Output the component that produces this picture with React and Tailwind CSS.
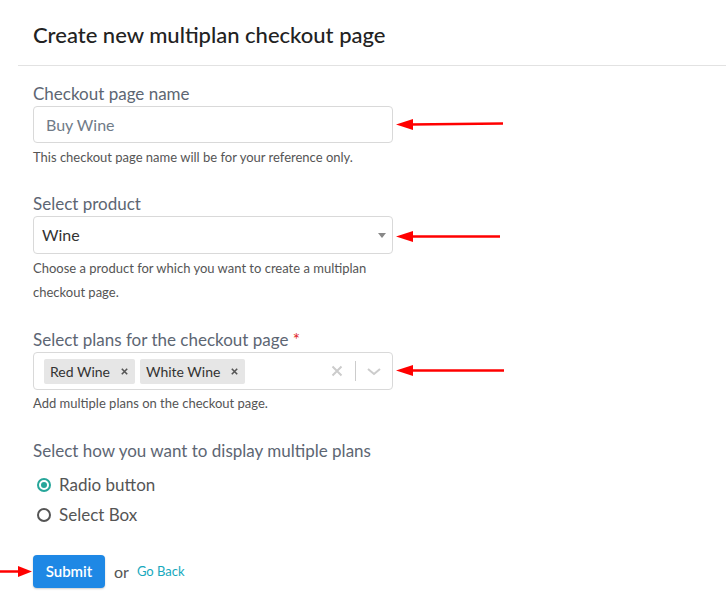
import React from "react";

function ChipX() {
  return (
    <svg width="7" height="7" viewBox="0 0 7 7"><path d="M0.8 0.8l5.4 5.4M6.2 0.8l-5.4 5.4" stroke="#555" strokeWidth="1.6" /></svg>
  );
}

export default function App() {
  return (
    <div className="relative w-[726px] h-[608px] bg-white overflow-hidden" style={{ fontFamily: "Lato, 'Open Sans', sans-serif" }}>
      <div className="pl-[33px] pt-[20px] text-[22px] leading-[29px] font-medium text-[#222]">Create new multiplan checkout page</div>
      <div className="ml-[18px] mt-[16px] h-px bg-[#e2e2e2]" />
      <div className="px-[33px]">
        <div className="mt-[16px] text-[17px] leading-[24px] text-[#5d6673]">Checkout page name</div>
        <div className="w-[360px] h-[37px] border border-[#d9d9d9] rounded-[4px] flex items-center pl-[12px] text-[16px] text-[#707b88]">Buy Wine</div>
        <div className="mt-[5px] text-[13px] leading-[18px] text-[#555]">This checkout page name will be for your reference only.</div>

        <div className="mt-[26px] text-[17px] leading-[24px] text-[#5d6673]">Select product</div>
        <div className="w-[360px] h-[38px] border border-[#d9d9d9] rounded-[4px] flex items-center justify-between pl-[8px] pr-[6px] text-[16px] text-[#333]">
          <span>Wine</span>
          <svg width="8" height="5" viewBox="0 0 8 5"><path d="M0 0h8L4 5z" fill="#888" /></svg>
        </div>
        <div className="mt-[2px] text-[13px] leading-[24px] text-[#555]">
          Choose a product for which you want to create a multiplan<br />checkout page.
        </div>

        <div className="mt-[24px] text-[17px] leading-[24px] text-[#5d6673]">
          Select plans for the checkout page <span className="text-[#e02424]">*</span>
        </div>
        <div className="w-[360px] h-[38px] border border-[#d9d9d9] rounded-[4px] flex items-center pl-[10px] text-[14px] text-[#333]">
          <div className="flex items-center gap-[5px] flex-1">
            <div className="h-[25px] bg-[#e6e6e6] rounded-[2px] flex items-center pl-[6px] pr-[7px] gap-[11px]">
              <span>Red Wine</span>
              <ChipX />
            </div>
            <div className="h-[25px] bg-[#e6e6e6] rounded-[2px] flex items-center pl-[6px] pr-[7px] gap-[11px]">
              <span>White Wine</span>
              <ChipX />
            </div>
          </div>
          <div className="flex items-center">
            <svg width="20" height="20" viewBox="0 0 20 20" className="mr-[8px]"><path d="M5.5 5.5l9 9M14.5 5.5l-9 9" stroke="#ccc" strokeWidth="2" /></svg>
            <div className="w-px h-[20px] bg-[#ccc]" />
            <svg width="36" height="20" viewBox="0 0 36 20"><path d="M12 8l6 5 6-5" stroke="#ccc" strokeWidth="2" fill="none" /></svg>
          </div>
        </div>
        <div className="mt-[4px] text-[13px] leading-[18px] text-[#555]">Add multiple plans on the checkout page.</div>

        <div className="mt-[27px] text-[17px] leading-[24px] text-[#5d6673]">Select how you want to display multiple plans</div>
        <div className="mt-[7px]">
          <div className="h-[30px] flex items-center pl-[4px] gap-[8px] text-[17px] text-[#555]">
            <span className="w-[14px] h-[14px] rounded-full border-2 border-[#26a69a] flex items-center justify-center">
              <span className="w-[6px] h-[6px] rounded-full bg-[#26a69a]" />
            </span>
            <span>Radio button</span>
          </div>
          <div className="h-[30px] flex items-center pl-[4px] gap-[8px] text-[17px] text-[#555]">
            <span className="w-[14px] h-[14px] rounded-full border-2 border-[#555]" />
            <span>Select Box</span>
          </div>
        </div>

        <div className="mt-[25px] flex items-center">
          <div className="w-[72px] h-[33px] rounded-[4px] bg-[#1e88e5] text-white text-[15px] font-semibold flex items-center justify-center shadow-[0_1px_2px_rgba(0,0,0,0.2)]">Submit</div>
          <span className="ml-[9px] text-[16px] text-[#555]">or</span>
          <span className="ml-[8px] text-[13px] text-[#17a9bd]">Go Back</span>
        </div>
      </div>

      <svg className="absolute left-0 top-0" width="726" height="608" viewBox="0 0 726 608">
        <g fill="#f00" stroke="#f00">
          <line x1="410" y1="124.5" x2="503" y2="123.5" strokeWidth="2.5" />
          <path d="M396 124.5L413 119V130z" strokeWidth="0" />
          <line x1="410" y1="236.5" x2="500" y2="236.5" strokeWidth="2.5" />
          <path d="M396 236.5L413 231V242z" strokeWidth="0" />
          <line x1="410" y1="370.5" x2="504" y2="370.5" strokeWidth="2.5" />
          <path d="M396 370.5L413 365V376z" strokeWidth="0" />
          <line x1="0" y1="571.5" x2="20" y2="571.5" strokeWidth="2.5" />
          <path d="M32 571.5L18 566V577z" strokeWidth="0" />
        </g>
      </svg>
    </div>
  );
}
